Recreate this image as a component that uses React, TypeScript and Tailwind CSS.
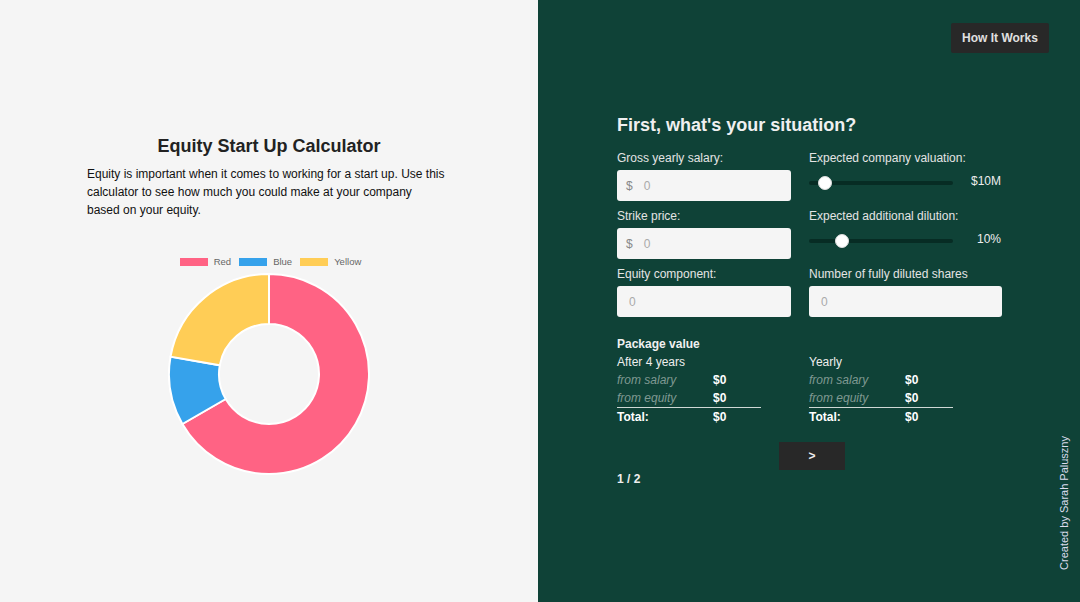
const font = { fontFamily: '"Liberation Sans", Arial, sans-serif' };

const slices = [
  { label: "Red", value: 300, color: "rgb(255,99,132)" },
  { label: "Blue", value: 50, color: "rgb(54,162,235)" },
  { label: "Yellow", value: 100, color: "rgb(255,205,86)" },
];

const Donut = () => {
  const cx = 100;
  const cy = 100;
  const r1 = 100;
  const r0 = 50;
  const total = slices.reduce((s, x) => s + x.value, 0);
  let start = -Math.PI / 2;
  const pt = (r: number, a: number) => `${cx + r * Math.cos(a)} ${cy + r * Math.sin(a)}`;
  return (
    <svg width="202" height="202" viewBox="-1 -1 202 202">
      {slices.map((s) => {
        const end = start + (s.value / total) * Math.PI * 2;
        const large = end - start > Math.PI ? 1 : 0;
        const d = `M ${pt(r1, start)} A ${r1} ${r1} 0 ${large} 1 ${pt(r1, end)} L ${pt(r0, end)} A ${r0} ${r0} 0 ${large} 0 ${pt(r0, start)} Z`;
        start = end;
        return <path key={s.label} d={d} fill={s.color} stroke="#fff" strokeWidth="2" />;
      })}
    </svg>
  );
};

const MoneyInput = ({ prefix }: { prefix?: boolean }) => (
  <div className="flex h-[31px] items-center rounded-[3px] bg-[#f5f5f5] px-[9px] text-[12px]">
    {prefix && <span className="mr-[8px] text-[#888]">$</span>}
    <span className="pl-[3px] text-[#aaa]">0</span>
  </div>
);

const Slider = ({ pos, value }: { pos: number; value: string }) => (
  <div className="flex h-[31px] items-start pt-[6px]">
    <div className="relative mt-[5px] h-[4px] w-[144px] rounded-full bg-[#072c24]">
      <div
        className="absolute top-[-5px] h-[14px] w-[14px] rounded-full border border-[#ddd] bg-white"
        style={{ left: pos - 7 }}
      />
    </div>
    <span className="ml-auto mt-[-4px] pr-[1px] text-[12px] text-[#eee]">{value}</span>
  </div>
);

const Label = ({ children }: { children: React.ReactNode }) => (
  <div className="mb-[4px] h-[15px] text-[12px] leading-[15px] text-[#e4e4e4]">{children}</div>
);

const Package = ({ title }: { title: string }) => (
  <div className="w-[144px] text-[12px] leading-[18px]">
    <div className="text-[#eee]">{title}</div>
    <div className="flex">
      <span className="w-[96px] italic text-[#7f9992]">from salary</span>
      <span className="font-bold text-white">$0</span>
    </div>
    <div className="flex">
      <span className="w-[96px] italic text-[#7f9992]">from equity</span>
      <span className="font-bold text-white">$0</span>
    </div>
    <div className="flex border-t border-[#cfd8d5]">
      <span className="w-[96px] font-bold text-white">Total:</span>
      <span className="font-bold text-white">$0</span>
    </div>
  </div>
);

export default function App() {
  return (
    <div className="flex h-[602px] w-[1080px] overflow-hidden" style={font}>
      <div className="h-full w-[538px] bg-[#f5f5f5] pt-[135px]">
        <div className="mx-auto w-[364px]">
          <h1 className="text-center text-[18px] font-bold leading-[22px] text-[#222]">
            Equity Start Up Calculator
          </h1>
          <p className="mt-[8px] w-[360px] text-[12px] leading-[18px] text-[#111]">
            Equity is important when it comes to working for a start up. Use this calculator to see how much you
            could make at your company based on your equity.
          </p>
        </div>
        <div className="mt-[36px] flex items-center justify-center gap-[8px] pl-[3px] text-[9.5px] text-[#666]">
          {slices.map((s) => (
            <div key={s.label} className="flex items-center gap-[6px]">
              <span className="h-[8px] w-[28px]" style={{ backgroundColor: s.color }} />
              <span>{s.label}</span>
            </div>
          ))}
        </div>
        <div className="mt-[4px] flex justify-center">
          <Donut />
        </div>
      </div>

      <div className="relative h-full flex-1 bg-[#0f4237] pl-[79px] pr-[31px] pt-[23px]">
        <div className="flex justify-end">
          <button className="h-[30px] w-[98px] rounded-[2px] bg-[#282828] text-[12px] font-bold text-[#e0e0e0]">
            How It Works
          </button>
        </div>

        <h2 className="mt-[61px] text-[18px] font-bold leading-[22px] text-[#f0f0f0]">
          First, what's your situation?
        </h2>

        <div className="mt-[15px] grid w-[385px] grid-cols-[174px_193px] gap-x-[18px] gap-y-[8px]">
          <div>
            <Label>Gross yearly salary:</Label>
            <MoneyInput prefix />
          </div>
          <div>
            <Label>Expected company valuation:</Label>
            <Slider pos={16} value="$10M" />
          </div>
          <div>
            <Label>Strike price:</Label>
            <MoneyInput prefix />
          </div>
          <div>
            <Label>Expected additional dilution:</Label>
            <Slider pos={33} value="10%" />
          </div>
          <div>
            <Label>Equity component:</Label>
            <MoneyInput />
          </div>
          <div>
            <Label>Number of fully diluted shares</Label>
            <MoneyInput />
          </div>
        </div>

        <div className="mt-[18px] text-[12px] font-bold leading-[18px] text-[#f0f0f0]">Package value</div>
        <div className="grid w-[385px] grid-cols-[174px_193px] gap-x-[18px]">
          <Package title="After 4 years" />
          <Package title="Yearly" />
        </div>

        <div className="mt-[16px] flex w-[385px] justify-center pl-[5px]">
          <button className="h-[28px] w-[66px] bg-[#282828] text-[12px] font-bold text-[#eee]">&gt;</button>
        </div>
        <div className="mt-[2px] text-[12px] font-bold leading-[14px] text-[#eee]">1 / 2</div>

        <div
          className="absolute bottom-[32px] right-[8px] text-[11px] text-[#dde]"
          style={{ writingMode: "vertical-rl", transform: "rotate(180deg)" }}
        >
          Created by Sarah Paluszny
        </div>
      </div>
    </div>
  );
}
